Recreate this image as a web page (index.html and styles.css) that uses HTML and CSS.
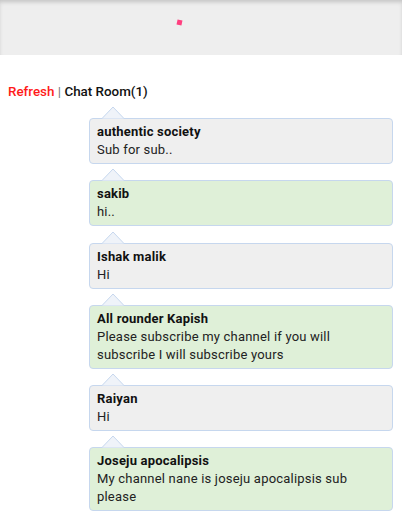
FILE: index.html
```html
<!DOCTYPE html>
<html>
<head>
<meta charset="utf-8">
<link rel="stylesheet" href="styles.css">
</head>
<body>
<div class="topbar"><span class="spinner"></span></div>
<div class="header"><span class="refresh">Refresh</span> <span class="sep">|</span> <span class="room">Chat Room(1)</span></div>
<div class="list">
  <div class="msg gray"><svg class="arrow" width="24" height="13" viewBox="0 0 24 13"><polygon points="1,12.5 12,1 23,12.5" class="arr-fill"/><polyline points="1,12.5 12,1 23,12.5" class="arr-line"/></svg><div class="name">authentic society</div><div class="text">Sub for sub..</div></div>
  <div class="msg green"><svg class="arrow" width="24" height="13" viewBox="0 0 24 13"><polygon points="1,12.5 12,1 23,12.5" class="arr-fill"/><polyline points="1,12.5 12,1 23,12.5" class="arr-line"/></svg><div class="name">sakib</div><div class="text">hi..</div></div>
  <div class="msg gray"><svg class="arrow" width="24" height="13" viewBox="0 0 24 13"><polygon points="1,12.5 12,1 23,12.5" class="arr-fill"/><polyline points="1,12.5 12,1 23,12.5" class="arr-line"/></svg><div class="name">Ishak malik</div><div class="text">Hi</div></div>
  <div class="msg green"><svg class="arrow" width="24" height="13" viewBox="0 0 24 13"><polygon points="1,12.5 12,1 23,12.5" class="arr-fill"/><polyline points="1,12.5 12,1 23,12.5" class="arr-line"/></svg><div class="name">All rounder Kapish</div><div class="text">Please subscribe my channel if you will subscribe I will subscribe yours</div></div>
  <div class="msg gray"><svg class="arrow" width="24" height="13" viewBox="0 0 24 13"><polygon points="1,12.5 12,1 23,12.5" class="arr-fill"/><polyline points="1,12.5 12,1 23,12.5" class="arr-line"/></svg><div class="name">Raiyan</div><div class="text">Hi</div></div>
  <div class="msg green"><svg class="arrow" width="24" height="13" viewBox="0 0 24 13"><polygon points="1,12.5 12,1 23,12.5" class="arr-fill"/><polyline points="1,12.5 12,1 23,12.5" class="arr-line"/></svg><div class="name">Joseju apocalipsis</div><div class="text">My channel nane is joseju apocalipsis sub please</div></div>
</div>
</body>
</html>
```
FILE: styles.css
```css
html, body {
  margin: 0;
  padding: 0;
  background: #ffffff;
  font-family: Roboto, "Liberation Sans", sans-serif;
  color: #111;
  overflow: hidden;
}
.topbar {
  position: relative;
  height: 55px;
  background: #eeeeee;
  box-shadow: inset 0 3px 4px -1px rgba(0,0,0,0.18);
}
.spinner {
  position: absolute;
  left: 177px;
  top: 20px;
  width: 5px;
  height: 5px;
  background: #ff3f7f;
  transform: rotate(12deg);
}
.header {
  margin-top: 29px;
  padding-left: 8px;
  font-size: 13.4px;
  line-height: 16px;
  font-weight: 500;
}
.refresh { color: #ff1a1a; }
.sep { color: #777; font-weight: 400; }
.room { color: #111; }
.list {
  display: flex;
  flex-direction: column;
  gap: 16.3px;
  margin-top: 18px;
  padding-left: 89px;
  padding-right: 9px;
}
.msg {
  position: relative;
  border: 1px solid #c6d7ee;
  border-radius: 4px;
  padding: 4px 7px 4px;
  font-size: 13px;
  line-height: 18px;
  letter-spacing: 0.2px;
}
.gray { background: #efefef; }
.green { background: #dff0d8; }
.arrow {
  position: absolute;
  left: 11px;
  top: -13px;
  display: block;
}
.arr-fill { fill: #eff3f9; stroke: none; }
.arr-line { fill: none; stroke: #c6d7ee; stroke-width: 1; }
.name { font-weight: 700; color: #111; }
.text { color: #222; }
```
